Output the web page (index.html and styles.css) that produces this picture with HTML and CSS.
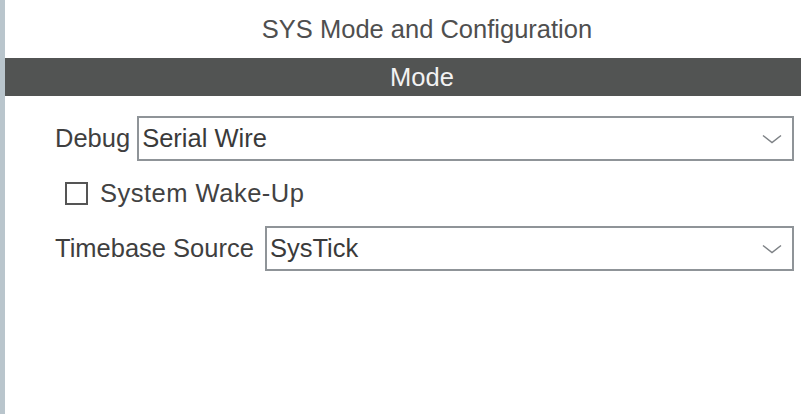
FILE: index.html
```html
<!DOCTYPE html>
<html>
<head>
<meta charset="utf-8">
<link rel="stylesheet" href="styles.css">
</head>
<body>
<div class="app">
  <div class="strip"></div>
  <div class="panel">
    <div class="title">SYS Mode and Configuration</div>
    <div class="bar">Mode</div>
    <div class="form">
      <div class="row">
        <span class="label label-debug">Debug</span>
        <div class="select">
          <span class="value">Serial Wire</span>
          <svg class="chev" width="20" height="10" viewBox="0 0 20 10"><path d="M1 1.5 L10 8.5 L19 1.5" fill="none" stroke="#7d8185" stroke-width="1.5"/></svg>
        </div>
      </div>
      <div class="check-row">
        <span class="box"></span>
        <span class="check-label">System Wake-Up</span>
      </div>
      <div class="row">
        <span class="label label-tb">Timebase Source</span>
        <div class="select">
          <span class="value">SysTick</span>
          <svg class="chev" width="20" height="10" viewBox="0 0 20 10"><path d="M1 1.5 L10 8.5 L19 1.5" fill="none" stroke="#7d8185" stroke-width="1.5"/></svg>
        </div>
      </div>
    </div>
  </div>
</div>
</body>
</html>
```

FILE: styles.css
```css
html, body {
  margin: 0;
  padding: 0;
  background: #ffffff;
}
body {
  font-family: "Liberation Sans", Arial, sans-serif;
  font-size: 25.5px;
  color: #3f3f3f;
}
.app {
  display: flex;
  width: 801px;
  height: 414px;
  overflow: hidden;
}
.strip {
  width: 5px;
  flex: none;
  background: #b9c5cc;
}
.panel {
  flex: 1;
  display: flex;
  flex-direction: column;
}
.title {
  height: 58px;
  line-height: 58px;
  text-align: center;
  padding-left: 48px;
  color: #4f4f4f;
  box-sizing: border-box;
}
.bar {
  height: 38px;
  line-height: 38px;
  background: #525453;
  color: #f2f2f2;
  text-align: center;
  padding-left: 38px;
}
.form {
  padding: 20px 7px 0 50px;
  display: flex;
  flex-direction: column;
}
.row {
  display: flex;
  align-items: center;
}
.label {
  white-space: nowrap;
}
.label-debug {
  margin-right: 7px;
}
.label-tb {
  margin-right: 11px;
}
.select {
  flex: 1;
  height: 45px;
  box-sizing: border-box;
  border: 2px solid #8f9498;
  display: flex;
  align-items: center;
  padding: 0 10px 0 3px;
  color: #3a3a3a;
}
.value {
  flex: 1;
}
.chev {
  display: block;
}
.check-row {
  height: 65px;
  display: flex;
  align-items: center;
  padding-left: 10px;
}
.box {
  width: 23px;
  height: 23px;
  box-sizing: border-box;
  border: 2px solid #555555;
  margin-right: 12px;
}
.check-label {
  color: #424242;
  letter-spacing: 0.5px;
}
```
